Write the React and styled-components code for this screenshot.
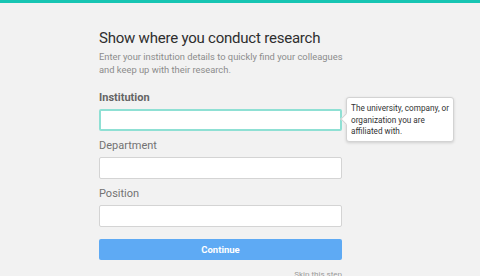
import React from 'react';
import styled, { createGlobalStyle } from 'styled-components';

const GlobalStyle = createGlobalStyle`
  html, body {
    margin: 0;
    padding: 0;
    background: #f2f2f2;
    font-family: Roboto, 'Liberation Sans', sans-serif;
  }
`;

const Page = styled.div`
  width: 480px;
  height: 276px;
  overflow: hidden;
  border-top: 3px solid #17c5b3;
  box-sizing: border-box;
  background: #f2f2f2;
`;

const Form = styled.div`
  width: 243px;
  margin-left: 99px;
  padding-top: 25px;
  display: flex;
  flex-direction: column;
`;

const Title = styled.h1`
  margin: 0;
  font-size: 15px;
  line-height: 20px;
  font-weight: 400;
  letter-spacing: -0.22px;
  color: #2e2e2e;
  white-space: nowrap;
`;

const Intro = styled.p`
  margin: 3px 0 0;
  font-size: 9.35px;
  line-height: 12.5px;
  color: #8c8c8c;
  white-space: nowrap;
`;

const Field = styled.div`
  position: relative;
  display: flex;
  flex-direction: column;
  margin-top: ${(p) => p.$gap || 8}px;
`;

const Label = styled.label`
  font-size: 11px;
  line-height: 14px;
  font-weight: ${(p) => (p.$active ? 700 : 400)};
  color: ${(p) => (p.$active ? '#646464' : '#737373')};
  margin-bottom: 4px;
`;

const Input = styled.input`
  box-sizing: border-box;
  width: 243px;
  height: 22px;
  margin: 0;
  background: #fff;
  border: ${(p) => (p.$focus ? '2px solid #8fe0d4' : '1px solid #d4d4d4')};
  border-radius: 2px;
  outline: none;
`;

const Button = styled.button`
  margin-top: 12px;
  height: 21px;
  width: 243px;
  padding: 0;
  border: none;
  border-radius: 2px;
  background: #5eaaf4;
  color: #fff;
  font-family: Roboto, 'Liberation Sans', sans-serif;
  font-size: 9.5px;
  font-weight: 700;
`;

const Skip = styled.div`
  align-self: flex-end;
  margin-top: 10px;
  font-size: 8px;
  line-height: 10px;
  color: #9a9a9a;
`;

const Tooltip = styled.div`
  position: absolute;
  left: 247px;
  top: 6px;
  width: 108px;
  box-sizing: border-box;
  padding: 5px 4px 3px 4px;
  background: #fff;
  border: 1px solid #d3d3d3;
  border-radius: 3px;
  box-shadow: 0 1px 3px rgba(0, 0, 0, 0.15);
  font-size: 8.2px;
  line-height: 11.7px;
  color: #333;
  white-space: nowrap;

  &::before {
    content: '';
    position: absolute;
    left: -5px;
    top: 17px;
    width: 7px;
    height: 7px;
    background: #fff;
    border-left: 1px solid #d3d3d3;
    border-bottom: 1px solid #d3d3d3;
    transform: rotate(45deg);
  }
`;

export default function App() {
  return (
    <>
      <GlobalStyle />
      <Page>
        <Form>
          <Title>Show where you conduct research</Title>
          <Intro>
            Enter your institution details to quickly find your colleagues
            <br />
            and keep up with their research.
          </Intro>
          <Field $gap={15}>
            <Label $active>Institution</Label>
            <Input $focus />
            <Tooltip>
              The university, company, or
              <br />
              organization you are
              <br />
              affiliated with.
            </Tooltip>
          </Field>
          <Field>
            <Label>Department</Label>
            <Input />
          </Field>
          <Field>
            <Label>Position</Label>
            <Input />
          </Field>
          <Button>Continue</Button>
          <Skip>Skip this step</Skip>
        </Form>
      </Page>
    </>
  );
}
